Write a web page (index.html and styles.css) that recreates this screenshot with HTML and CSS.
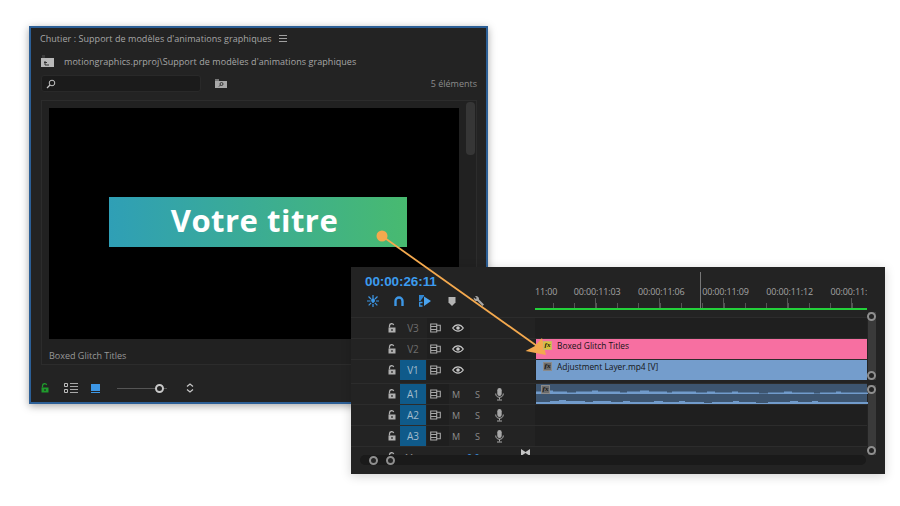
FILE: index.html
```html
<!DOCTYPE html>
<html lang="fr">
<head>
<meta charset="utf-8">
<title>Chutier</title>
<link rel="stylesheet" href="styles.css">
</head>
<body>
<svg class="defs" width="0" height="0" aria-hidden="true">
  <symbol id="lock" viewBox="0 0 8 10"><path d="M1.500 4.500V2.800a2.200 2.200 0 0 1 4.200-.8" fill="none" stroke="currentColor" stroke-width="1.300"/><path d="M.5 4.500h7V9.500h-7zM3.200 6.200v1.600h1.600V6.200z" fill="currentColor" fill-rule="evenodd"/></symbol>
  <symbol id="sync" viewBox="0 0 11 10"><path d="M.7 1h6v2.500h-6zM.7 3.500v3h6v-3M.7 6.500h6V9h-6zM6.700 2.200h3.600v5.600H6.700" fill="none" stroke="currentColor" stroke-width="1.100"/></symbol>
  <symbol id="eye" viewBox="0 0 12 8"><path d="M.7 4C2.300 1.700 4 .8 6 .8s3.700.9 5.300 3.200C9.700 6.300 8 7.200 6 7.200S2.300 6.300.7 4z" fill="none" stroke="currentColor" stroke-width="1.200"/><circle cx="6" cy="4" r="1.800" fill="currentColor"/></symbol>
  <symbol id="mic" viewBox="0 0 9 13"><rect x="2.300" y="0" width="4.400" height="8" rx="2.200" fill="currentColor"/><path d="M.7 5.500c0 2.500 1.500 3.800 3.800 3.800s3.800-1.300 3.800-3.800M4.500 9.300v2.200M2 12h5" fill="none" stroke="currentColor" stroke-width="1"/></symbol>
</svg>

<section class="window bin">
  <header class="bin-title"><span>Chutier : Support de modèles d'animations graphiques</span>
    <svg class="menu-icon" width="8" height="7" viewBox="0 0 8 7"><path d="M0 .5h8M0 3.500h8M0 6.500h8" stroke="#a0a0a0" stroke-width="1"/></svg>
  </header>
  <div class="bin-path">
    <svg class="folder-icon" width="13" height="12" viewBox="0 0 13 12"><path d="M1 0h3v3H1z" fill="#3c3c3c"/><path d="M0 3h13v9H0z" fill="#b9b9b9"/><path d="M4 6v4h4M3 7.500h3" stroke="#333" stroke-width="1" fill="none"/></svg>
    <span>motiongraphics.prproj\Support de modèles d'animations graphiques</span>
  </div>
  <div class="bin-search">
    <div class="search-field">
      <svg width="10" height="10" viewBox="0 0 10 10"><circle cx="6" cy="4" r="2.800" fill="none" stroke="#c4c4c4" stroke-width="1"/><path d="M4 6 1 9" stroke="#c4c4c4" stroke-width="1.300"/></svg>
    </div>
    <svg class="find-icon" width="12" height="9" viewBox="0 0 12 9"><path d="M0 0h4v2H0z" fill="#777"/><path d="M0 2h12v7H0z" fill="#a8a8a8"/><circle cx="6.500" cy="5" r="1.500" fill="none" stroke="#333"/><path d="M5.500 6 4 7.500" stroke="#333"/></svg>
    <span class="count">5 éléments</span>
  </div>
  <div class="thumb-list">
    <div class="thumb-col">
      <div class="poster">
        <div class="title-card">Votre titre</div>
      </div>
      <div class="thumb-label">Boxed Glitch Titles</div>
    </div>
    <div class="v-thumb"></div>
  </div>
  <footer class="bin-foot">
    <svg class="foot-lock" width="8" height="10"><use href="#lock"/></svg>
    <svg class="foot-list" width="14" height="10" viewBox="0 0 14 10"><path d="M.5.500h3v3h-3zM.5 6.500h3v3h-3z" fill="none" stroke="#bdbdbd"/><path d="M6 .5h8M6 3.500h8M6 6.500h8M6 9.500h8" stroke="#a8a8a8"/></svg>
    <svg class="foot-icon" width="9" height="9" viewBox="0 0 9 9"><path d="M0 0h9v7H0z" fill="#3d97e6"/><path d="M0 8.500h9" stroke="#3d97e6"/></svg>
    <div class="zoom-slider"><i class="knob"></i></div>
    <svg class="foot-sort" width="8" height="10" viewBox="0 0 8 10"><path d="M1 3.500 4 1l3 2.500M1 6.500 4 9l3-2.500" fill="none" stroke="#c8c8c8" stroke-width="1.200"/></svg>
  </footer>
</section>

<section class="window timeline">
  <div class="tl-main">
    <div class="tl-top">
      <div class="tl-tools">
        <div class="timecode">00:00:26:11</div>
        <div class="tools-row">
          <svg width="12" height="12" viewBox="0 0 12 12"><path d="M6 0v12M1.500 1.500l9 9M10.500 1.500l-9 9M0 6h12" stroke="#3d97e6" stroke-width="1.200" stroke-dasharray="3.500 1"/><circle cx="6" cy="5" r="1.800" fill="#3d97e6"/></svg>
          <svg width="10" height="11" viewBox="0 0 10 11"><path d="M1.500 10V5a3.500 3.500 0 0 1 7 0v5" fill="none" stroke="#3d97e6" stroke-width="2.400"/></svg>
          <svg width="12" height="12" viewBox="0 0 12 12"><path d="M0 0h5v1L1.500 6H0z" fill="#2f86d2"/><path d="M5 1.500 12 6l-7 5z" fill="#4aa3ef"/><path d="M3.500 7.500H.7V11h2.800" fill="none" stroke="#3d97e6" stroke-width="1.300"/></svg>
          <svg class="tool-far" width="8" height="9" viewBox="0 0 8 9"><path d="M.5 0h7v5.500L4 9 .5 5.500z" fill="#b4b4b4"/></svg>
          <svg class="tool-far" width="12" height="12" viewBox="0 0 12 12"><path d="M2 1.200A3 3 0 0 1 6 4.500l5 5L9.500 11l-5-5A3 3 0 0 1 .8 2.500l2 1.500 1-1z" fill="#a8a8a8"/></svg>
        </div>
      </div>
      <div class="ruler">
        <div class="ruler-labels">
          <span class="tick-first">11:00</span><span class="tick">00:00:11:03</span><span class="tick">00:00:11:06</span><span class="tick">00:00:11:09</span><span class="tick">00:00:11:12</span><span class="tick">00:00:11:15</span>
        </div>
        <div class="ruler-ticks"></div>
        <div class="work-area"></div>
        <i class="playhead"></i>
      </div>
    </div>

    <div class="track">
      <div class="head video"><svg class="t-lock" width="8" height="10"><use href="#lock"/></svg><span class="t-name">V3</span><svg class="t-sync" width="11" height="10"><use href="#sync"/></svg><svg class="t-eye" width="12" height="8"><use href="#eye"/></svg></div>
      <div class="lane"></div>
    </div>
    <div class="track">
      <div class="head video"><svg class="t-lock" width="8" height="10"><use href="#lock"/></svg><span class="t-name">V2</span><svg class="t-sync" width="11" height="10"><use href="#sync"/></svg><svg class="t-eye" width="12" height="8"><use href="#eye"/></svg></div>
      <div class="lane"><div class="clip pink"><b class="fx yellow">fx</b><span>Boxed Glitch Titles</span></div></div>
    </div>
    <div class="track">
      <div class="head video"><svg class="t-lock" width="8" height="10"><use href="#lock"/></svg><span class="t-name on">V1</span><svg class="t-sync" width="11" height="10"><use href="#sync"/></svg><svg class="t-eye" width="12" height="8"><use href="#eye"/></svg></div>
      <div class="lane"><div class="clip blue"><b class="fx">fx</b><span>Adjustment Layer.mp4 [V]</span></div></div>
    </div>

    <div class="track first-audio">
      <div class="head audio"><svg class="t-lock" width="8" height="10"><use href="#lock"/></svg><span class="t-name on">A1</span><svg class="t-sync" width="11" height="10"><use href="#sync"/></svg><span class="t-m">M</span><span class="t-s">S</span><svg class="t-mic" width="9" height="13"><use href="#mic"/></svg></div>
      <div class="lane">
        <div class="clip wave">
          <b class="fx">fx</b>
          <svg class="wave-svg" width="332" height="20" viewBox="0 0 332 20"><path d="M0 7.500h8v-1h9v1h14v1h9v-1h16v-1h6v1h22v1h7v-1h13v-1h9v1h18v1h5v-1h24v1h11v-1h8v1h17v-1h6v1h21v1h9v-1h16v-1h8v1h22v1h6v-1h16v-1h5v1H332V10H0zM0 18h14v-1h9v-1h7v1h19v1h8v-1h18v1h12v-1h7v1h24v-1h9v1h16v-1h6v1h19v1h8v-1h21v-1h6v1h17v1h12v-1h22v-1h8v1h14v-1h6v1H332v3H0z" fill="#719bcb"/></svg>
        </div>
      </div>
    </div>
    <div class="track">
      <div class="head audio"><svg class="t-lock" width="8" height="10"><use href="#lock"/></svg><span class="t-name on">A2</span><svg class="t-sync" width="11" height="10"><use href="#sync"/></svg><span class="t-m">M</span><span class="t-s">S</span><svg class="t-mic" width="9" height="13"><use href="#mic"/></svg></div>
      <div class="lane"></div>
    </div>
    <div class="track">
      <div class="head audio"><svg class="t-lock" width="8" height="10"><use href="#lock"/></svg><span class="t-name on">A3</span><svg class="t-sync" width="11" height="10"><use href="#sync"/></svg><span class="t-m">M</span><span class="t-s">S</span><svg class="t-mic" width="9" height="13"><use href="#mic"/></svg></div>
      <div class="lane"></div>
    </div>
    <div class="track-cut">
      <svg class="t-lock cut-lock" width="8" height="10"><use href="#lock"/></svg>
      <span class="cut-name">Master</span>
      <span class="cut-value">0.0</span>
      <svg class="cut-bow" width="9" height="7" viewBox="0 0 9 7"><path d="M0 0l4.500 3L9 0v7L4.500 4 0 7z" fill="#c4c4c4"/></svg>
    </div>
    <div class="h-scroll">
      <i class="ring"></i><i class="ring"></i>
    </div>
  </div>
  <div class="tl-vscroll">
    <div class="v-seg first"><i class="ring"></i><i class="ring"></i></div>
    <div class="v-seg second"><i class="ring"></i><i class="ring"></i></div>
  </div>
</section>

<svg class="callout" width="900" height="506" viewBox="0 0 900 506" aria-hidden="true">
  <circle cx="382" cy="236" r="5.500" fill="#f4a94e"/>
  <path d="M382 236 537 346" stroke="#f4a94e" stroke-width="1.800" fill="none"/>
  <path d="M525.500 351 535 346 542 338 546 355z" fill="#f4a94e"/>
</svg>
</body>
</html>
```

FILE: styles.css
```css
* { box-sizing: border-box; }
html, body { margin: 0; padding: 0; }
body {
  width: 900px;
  height: 506px;
  background: #fff;
  position: relative;
  overflow: hidden;
  font-family: "Open Sans", "Noto Sans", sans-serif;
  color: #a8a8a8;
}
.defs { position: absolute; }
svg { display: block; flex: none; }

.window { position: absolute; background: #232323; }

/* Bin panel */
.bin {
  left: 29px;
  top: 26px;
  width: 459px;
  height: 378px;
  border: 2px solid #2c5f96;
  box-shadow: 0 2px 8px rgba(0, 0, 0, .35);
  padding: 0 9px 0 10px;
  display: flex;
  flex-direction: column;
}
.bin-title {
  height: 20px;
  margin-left: -1px;
  display: flex;
  align-items: center;
  gap: 7px;
  font-size: 9px;
  letter-spacing: .05px;
  color: #a6a6a6;
}
.bin-path {
  height: 12px;
  margin-top: 7px;
  display: flex;
  align-items: center;
  gap: 10px;
  font-size: 9px;
  letter-spacing: .06px;
  color: #a6a6a6;
}
.bin-search {
  margin-top: 8px;
  height: 17px;
  display: flex;
  align-items: center;
  font-size: 9px;
}
.search-field {
  width: 160px;
  height: 17px;
  background: #1b1b1b;
  border-radius: 3px;
  border: 1px solid #292929;
  padding: 3px 0 0 4px;
}
.find-icon { margin-left: 14px; }
.count { margin-left: auto; color: #8c8c8c; }
.thumb-list {
  margin-top: 8px;
  height: 265px;
  border: 1px solid #2c2c2c;
  background: #212121;
  display: flex;
  padding: 7px 0 0 7px;
  position: relative;
}
.thumb-col { width: 410px; }
.poster {
  width: 410px;
  height: 231px;
  background: #000;
  padding: 89px 0 0 60px;
}
.title-card {
  width: 298px;
  height: 50px;
  padding-right: 7px;
  background: linear-gradient(90deg, #2f9fb6, #48ba70);
  color: #fff;
  font-size: 31px;
  font-weight: 700;
  line-height: 46px;
  text-align: center;
  letter-spacing: .5px;
}
.thumb-label { margin-top: 10px; font-size: 9px; line-height: 14px; color: #989898; }
.v-thumb {
  position: absolute;
  left: 424px;
  top: 1px;
  width: 9px;
  height: 53px;
  background: #363636;
  border-radius: 4px;
}
.bin-foot {
  height: 36px;
  padding-top: 10px;
  display: flex;
  align-items: center;
  color: #1f9a2c;
}
.foot-list { margin-left: 15px; }
.foot-icon { margin-left: 13px; }
.zoom-slider {
  margin-left: 17px;
  width: 50px;
  height: 1px;
  background: #555;
  position: relative;
}
.knob {
  position: absolute;
  left: 38px;
  top: -4px;
  width: 9px;
  height: 9px;
  border: 2px solid #c8c8c8;
  border-radius: 50%;
  background: #232323;
}
.foot-sort { margin-left: 19px; }

/* Timeline panel */
.timeline {
  left: 351px;
  top: 267px;
  width: 534px;
  height: 207px;
  display: flex;
  box-shadow: 0 2px 10px rgba(0, 0, 0, .18);
}
.tl-main { width: 516px; display: flex; flex-direction: column; }
.tl-top { height: 50px; display: flex; }
.tl-tools { width: 184px; padding: 7px 0 0 14px; }
.timecode {
  font-family: "Liberation Sans", sans-serif;
  font-size: 13.500px;
  font-weight: 700;
  line-height: 16px;
  letter-spacing: -.1px;
  color: #3c9bee;
}
.tools-row {
  margin-top: 5px;
  display: flex;
  align-items: center;
  gap: 15px;
  padding-left: 2px;
}
.tool-far { margin-left: 2px; }
.ruler { width: 332px; position: relative; overflow: hidden; }
.ruler-labels {
  position: absolute;
  left: 0;
  top: 19px;
  display: flex;
  font-size: 9px;
  line-height: 12px;
  letter-spacing: -.15px;
  color: #a4a4a4;
  white-space: nowrap;
}
.tick-first { width: 30px; }
.tick { width: 64.200px; text-align: center; flex: none; }
.ruler-ticks {
  position: absolute;
  left: 0;
  top: 31px;
  width: 332px;
  height: 10px;
  background:
    repeating-linear-gradient(90deg, transparent 0 60px, #555 60px 61px, transparent 61px 64px) 0 0 / 100% 10px no-repeat,
    repeating-linear-gradient(90deg, transparent 0 18px, #555 18px 19px, transparent 19px 21.330px) 0 100% / 100% 5px no-repeat;
}
.work-area {
  position: absolute;
  left: 0;
  top: 41px;
  width: 332px;
  height: 2px;
  background: #23d13a;
}
.playhead {
  position: absolute;
  left: 165px;
  top: 5px;
  width: 1px;
  height: 36px;
  background: #777;
}

.track { height: 21px; display: flex; border-top: 1px solid #2c2c2c; }
.first-audio { margin-top: 3px; }
.head {
  width: 184px;
  display: grid;
  grid-template-columns: 45px 26px 20px 1fr;
  align-items: center;
  color: #a8a8a8;
}
.head.video { background: linear-gradient(#1f1f1f, #1f1f1f) 76px 0 / 43px 100% no-repeat; }
.head.audio { background: linear-gradient(#1f1f1f, #1f1f1f) 76px 0 / 22px 100% no-repeat; }
.t-lock { grid-column: 1; justify-self: end; color: #b0b0b0; }
.t-name {
  grid-column: 2;
  margin-left: 4px;
  height: 20px;
  width: 26px;
  font-size: 10px;
  line-height: 20px;
  text-align: center;
  color: #6e6e6e;
}
.t-name.on { background: #0f5a8a; color: #a3bccc; }
.t-sync { grid-column: 3; margin-left: 8px; color: #a8a8a8; }
.t-eye { grid-column: 4; margin-left: 10px; color: #c6c6c6; }
.t-m { grid-column: 4; grid-row: 1; margin-left: 10px; font-size: 9px; color: #8c8c8c; }
.t-s { grid-column: 4; grid-row: 1; margin-left: 33px; font-size: 9px; color: #8c8c8c; }
.t-mic { grid-column: 4; grid-row: 1; margin-left: 53px; color: #a8a8a8; }
.lane { width: 332px; background: #1f1f1f; }

.clip {
  height: 20px;
  margin-left: 1px;
  display: flex;
  align-items: flex-start;
  font-size: 8.400px;
  line-height: 12px;
  color: #141414;
  position: relative;
}
.clip span { margin: 1px 0 0 5px; }
.pink { background: #f76fa1; }
.blue { background: #749dcc; }
.wave { background: #3d5570; }
.wave-svg { position: absolute; left: 0; top: 0; }
.fx {
  position: relative;
  z-index: 1;
  width: 9px;
  height: 9px;
  margin: 2px 0 0 7px;
  background: #6b6b6b;
  border: 1px solid #8a8a8a;
  font: italic 700 7px/7px "Liberation Serif", serif;
  text-align: center;
  color: #111;
}
.fx.yellow { background: #d9c23a; border-color: #c9b66a; }
.wave .fx { margin: 1px 0 0 5px; }

.track-cut {
  height: 9px;
  border-top: 1px solid #2c2c2c;
  display: flex;
  align-items: flex-start;
  overflow: hidden;
  font-size: 9px;
  line-height: 12px;
}
.cut-lock { margin: 5px 0 0 37px; }
.cut-name { margin: 5px 0 0 9px; color: #8c8c8c; width: 62px; flex: none; }
.cut-value { color: #3c9bee; width: 54px; flex: none; margin-top: 5px; }
.cut-bow { margin: 2px 0 0 0; }
.h-scroll {
  height: 10px;
  margin-left: 9px;
  width: 506px;
  background: #1a1a1a;
  border-radius: 5px;
  display: flex;
  align-items: center;
  gap: 8px;
  padding-left: 9px;
}
.ring {
  width: 9px;
  height: 9px;
  border: 2px solid #8f8f8f;
  border-radius: 50%;
  background: #232323;
  flex: none;
}
.tl-vscroll { margin: 45px 0 0 1px; width: 8px; }
.v-seg {
  width: 8px;
  background: #3a3a3a;
  display: flex;
  flex-direction: column;
  justify-content: space-between;
  align-items: center;
}
.v-seg .ring { margin-left: -1px; }
.v-seg.first { height: 68px; }
.v-seg.second { height: 70px; margin-top: 5px; }
.callout { position: absolute; left: 0; top: 0; pointer-events: none; }
```
